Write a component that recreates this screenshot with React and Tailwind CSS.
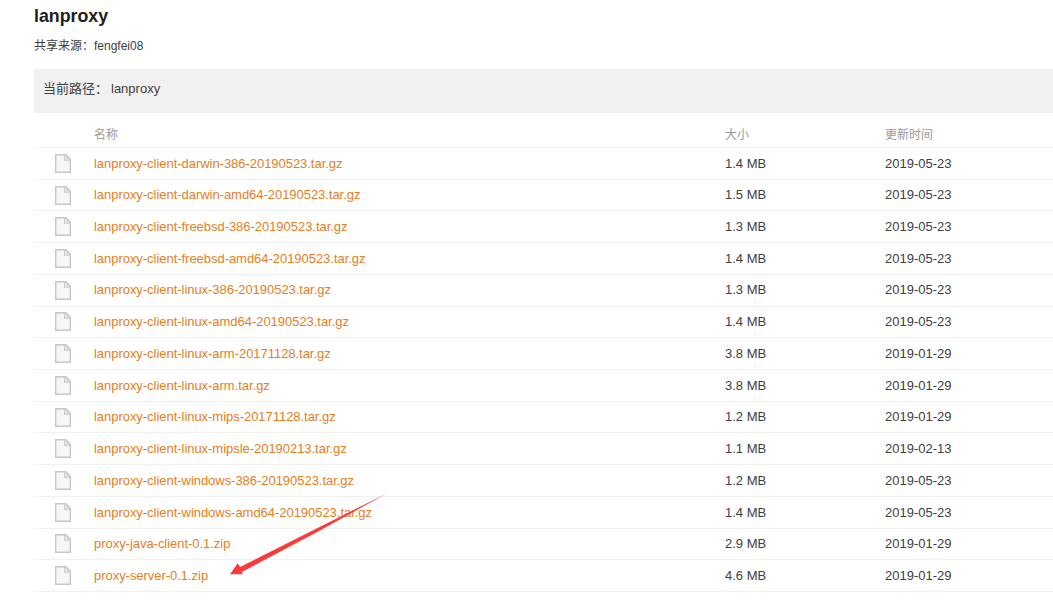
import React from 'react';

const files = [
  { name: 'lanproxy-client-darwin-386-20190523.tar.gz', size: '1.4 MB', date: '2019-05-23' },
  { name: 'lanproxy-client-darwin-amd64-20190523.tar.gz', size: '1.5 MB', date: '2019-05-23' },
  { name: 'lanproxy-client-freebsd-386-20190523.tar.gz', size: '1.3 MB', date: '2019-05-23' },
  { name: 'lanproxy-client-freebsd-amd64-20190523.tar.gz', size: '1.4 MB', date: '2019-05-23' },
  { name: 'lanproxy-client-linux-386-20190523.tar.gz', size: '1.3 MB', date: '2019-05-23' },
  { name: 'lanproxy-client-linux-amd64-20190523.tar.gz', size: '1.4 MB', date: '2019-05-23' },
  { name: 'lanproxy-client-linux-arm-20171128.tar.gz', size: '3.8 MB', date: '2019-01-29' },
  { name: 'lanproxy-client-linux-arm.tar.gz', size: '3.8 MB', date: '2019-01-29' },
  { name: 'lanproxy-client-linux-mips-20171128.tar.gz', size: '1.2 MB', date: '2019-01-29' },
  { name: 'lanproxy-client-linux-mipsle-20190213.tar.gz', size: '1.1 MB', date: '2019-02-13' },
  { name: 'lanproxy-client-windows-386-20190523.tar.gz', size: '1.2 MB', date: '2019-05-23' },
  { name: 'lanproxy-client-windows-amd64-20190523.tar.gz', size: '1.4 MB', date: '2019-05-23' },
  { name: 'proxy-java-client-0.1.zip', size: '2.9 MB', date: '2019-01-29' },
  { name: 'proxy-server-0.1.zip', size: '4.6 MB', date: '2019-01-29' },
];

function FileIcon() {
  return (
    <svg width="16" height="19" viewBox="0 0 16 19" fill="none">
      <path d="M.7.7h10.1l4.5 4.5v13.1H.7z" fill="#f6f6f6" stroke="#c6c6c6" strokeWidth="1.4" />
      <path d="M9.7.7v5.4h5.6" stroke="#c8c8c8" strokeWidth="1.2" />
      <path d="M11.9 1.5v2.6h2.6" stroke="#c8c8c8" />
    </svg>
  );
}

function FileRow({ file }) {
  return (
    <div className="grid h-[31.73px] grid-cols-[60px_631px_160px_1fr] items-center border-b border-[#f1f1f1] text-[13px]">
      <div className="pl-[21px]">
        <FileIcon />
      </div>
      <a href="#" className="tracking-[-0.038px] text-[#e67e22]">{file.name}</a>
      <span>{file.size}</span>
      <span>{file.date}</span>
    </div>
  );
}

export default function App() {
  return (
    <div className="relative h-[602px] overflow-hidden bg-white pl-[34px] font-['Liberation_Sans','Noto_Sans_CJK_SC',sans-serif] text-[#404040]">
      <h1 className="h-8 text-[17.8px] leading-8 font-bold text-[#212121]">lanproxy</h1>
      <p className="h-[37px] pt-[5px] text-xs leading-[18px]">共享来源：fengfei08</p>

      {/* Current path */}
      <div className="flex h-11 rounded-l-xs bg-[#f1f1f1] pt-2.5 pl-[9px] text-[13px] leading-5">
        <span className="w-[68px]">当前路径：</span>
        <span>lanproxy</span>
      </div>

      <div className="grid h-[35px] grid-cols-[60px_631px_160px_1fr] border-b border-[#f1f1f1] pt-[13px] text-xs leading-[18px] text-[#999]">
        <span />
        <span>名称</span>
        <span>大小</span>
        <span>更新时间</span>
      </div>
      {files.map((file) => (
        <FileRow key={file.name} file={file} />
      ))}

      {/* Arrow pointing at the server package */}
      <svg className="pointer-events-none absolute top-[490px] left-[226px]" width="164" height="90" viewBox="0 0 164 90">
        <path d="M161 3.3L94 36.8L14 77L11.7 73.3L4 84.3L17 84.3L15.8 82L94 40.4Z" fill="#fb3b3b" />
      </svg>
    </div>
  );
}
